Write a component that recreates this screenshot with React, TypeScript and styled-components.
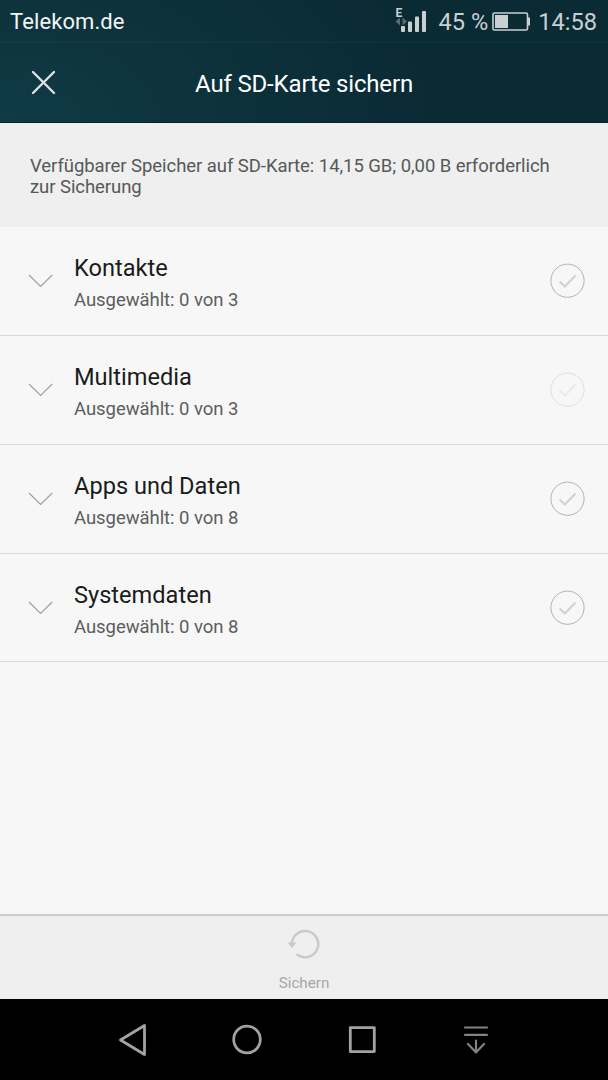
import React from "react";
import styled, { createGlobalStyle } from "styled-components";

const GlobalStyle = createGlobalStyle`
  * { box-sizing: border-box; }
  body { margin: 0; background: #000; font-family: Roboto, "Liberation Sans", sans-serif; }
`;

const Screen = styled.div`
  width: 608px;
  height: 1080px;
  display: flex;
  flex-direction: column;
  overflow: hidden;
  background: #f7f7f7;
`;

const Header = styled.header`
  height: 123px;
  flex: none;
  background: radial-gradient(ellipse 440px 260px at 0 125px, #0f3b46 0%, #0d333d 45%, #0a2a34 100%);
  border-bottom: 1px solid #08222b;
`;

const StatusBar = styled.div`
  height: 43px;
  padding: 1px 11px 0 10px;
  display: flex;
  align-items: center;
  border-bottom: 1px solid rgba(40, 90, 100, 0.22);
`;

const StatusText = styled.span<{ $size: number; $color?: string; $left?: number; $spacing?: number }>`
  font-size: ${(p) => p.$size}px;
  line-height: 28px;
  white-space: nowrap;
  color: ${(p) => p.$color ?? "#c9d0d2"};
  margin-left: ${(p) => p.$left ?? 0}px;
  letter-spacing: ${(p) => p.$spacing ?? 0}px;
`;

const StatusIcons = styled.div`
  margin-left: auto;
  display: flex;
  align-items: center;
`;

const SignalBox = styled.span`
  display: grid;
  width: 34px;
  height: 28px;
  > * { grid-area: 1 / 1; }
`;

const NetworkType = styled.span`
  font-size: 12px;
  font-weight: 700;
  line-height: 10px;
  color: #c9d0d2;
  padding-left: 3px;
`;

const Battery = styled.svg`
  margin-left: 4px;
`;

const TitleBar = styled.div`
  height: 79px;
  display: grid;
  grid-template-columns: 87px 1fr 87px;
  align-items: center;
`;

const IconButton = styled.button`
  border: 0;
  padding: 0;
  background: none;
  display: flex;
  align-items: center;
  justify-content: center;
`;

const Title = styled.h1`
  margin: 0;
  padding-top: 3px;
  text-align: center;
  font-size: 24px;
  line-height: 28px;
  letter-spacing: -0.16px;
  font-weight: 400;
  color: #fff;
`;

const Info = styled.p`
  margin: 0;
  height: 104px;
  flex: none;
  padding: 33px 30px 0;
  background: #efefef;
  color: #555958;
  font-size: 18.5px;
  letter-spacing: -0.06px;
  line-height: 21px;
`;

const List = styled.ul`
  list-style: none;
  margin: 0;
  padding: 0;
  flex: 1;
`;

const Row = styled.li`
  height: 109px;
  display: grid;
  grid-template-columns: 74px 1fr 58px;
  align-items: center;
  border-bottom: 1px solid #d9d9d9;
  &:last-child { height: 108px; }
`;

const Chevron = styled.svg`
  margin-left: 28px;
`;

const RowText = styled.div`
  padding-top: 4px;
`;

const RowTitle = styled.div`
  font-size: 23.6px;
  line-height: 30px;
  color: #1a1c1b;
`;

const RowSub = styled.div`
  margin-top: 4px;
  font-size: 18.5px;
  letter-spacing: -0.05px;
  line-height: 26px;
  color: #5a5e5d;
`;

const Footer = styled.footer`
  height: 85px;
  flex: none;
  padding-top: 13px;
  background: #efefef;
  border-top: 2px solid #cccccc;
  display: flex;
  flex-direction: column;
  align-items: center;
`;

const FooterLabel = styled.span`
  margin-top: 12px;
  font-size: 15.2px;
  line-height: 20px;
  color: #a3a8a7;
`;

const NavBar = styled.nav`
  height: 81px;
  flex: none;
  background: #000;
  display: flex;
  justify-content: center;
  padding-left: 1px;
`;

const NavButton = styled(IconButton)`
  width: 114.6px;
  height: 81px;
`;

const Check = ({ disabled }: { disabled?: boolean }) => (
  <svg width="36" height="36" viewBox="0 0 36 36" fill="none" opacity={disabled ? 0.35 : 1}>
    <circle cx="17.5" cy="17.700" r="16.600" stroke="#aeb3b2" strokeWidth="1" />
    <path d="M9.600 18.500l5.200 5L25.600 12.500" stroke="#d0d3d2" strokeWidth="2.200" />
  </svg>
);

const sections = [
  { name: "Kontakte", total: 3, disabled: false },
  { name: "Multimedia", total: 3, disabled: true },
  { name: "Apps und Daten", total: 8, disabled: false },
  { name: "Systemdaten", total: 8, disabled: false },
];

export default function App() {
  return (
    <>
      <GlobalStyle />
      <Screen>
        <Header>
          <StatusBar>
            <StatusText $size={22} $color="#f2f5f5" $spacing={0.1}>Telekom.de</StatusText>
            <StatusIcons>
              <SignalBox>
                <svg width="34" height="28" viewBox="0 0 34 28">
                  <path d="M7 9.500v8l-4.500-4zM9.500 9.500v8l4.500-4z" fill="#5f6b6f" />
                  <g fill="#c9d0d2">
                    <rect x="8" y="18" width="4" height="6" rx="1" />
                    <rect x="15" y="13.500" width="4" height="10.500" rx="1" />
                    <rect x="22" y="8.500" width="4" height="15.500" rx="1" />
                    <rect x="29" y="3" width="4" height="21" rx="1" />
                  </g>
                </svg>
                <NetworkType>E</NetworkType>
              </SignalBox>
              <StatusText $size={23.6} $left={12}>45 %</StatusText>
              <Battery width="39" height="20" viewBox="0 0 39 20">
                <rect x="1" y="1" width="34.500" height="17" rx="1.500" fill="none" stroke="#c9d0d2" strokeWidth="1.600" />
                <rect x="3" y="3" width="13" height="13" fill="#c9d0d2" />
                <rect x="36" y="5.500" width="2" height="8" fill="#c9d0d2" />
              </Battery>
              <StatusText $size={23.6} $left={7}>14:58</StatusText>
            </StatusIcons>
          </StatusBar>
          <TitleBar>
            <IconButton aria-label="Schließen">
              <svg width="26" height="26" viewBox="0 0 26 26" stroke="#dfe2e3" strokeWidth="2.400" strokeLinecap="round">
                <path d="M2 2l21 21M23 2l-21 21" />
              </svg>
            </IconButton>
            <Title>Auf SD-Karte sichern</Title>
          </TitleBar>
        </Header>
        <Info>Verfügbarer Speicher auf SD-Karte: 14,15 GB; 0,00 B erforderlich zur Sicherung</Info>
        <List>
          {sections.map((s) => (
            <Row key={s.name}>
              <Chevron width="26" height="14" viewBox="0 0 26 14" fill="none" stroke="#9a9f9e" strokeWidth="1.100">
                <path d="M1 1l11.600 11.500L24.200 1" />
              </Chevron>
              <RowText>
                <RowTitle>{s.name}</RowTitle>
                <RowSub>Ausgewählt: 0 von {s.total}</RowSub>
              </RowText>
              <Check disabled={s.disabled} />
            </Row>
          ))}
        </List>
        <Footer>
          <svg width="34" height="32" viewBox="0 0 34 32">
            <path d="M5 17A13.200 13.200 0 1 1 9.500 25.200" fill="none" stroke="#c6cac9" strokeWidth="2.400" />
            <path d="M0.500 13.500h9l-4.500 5.500z" fill="#c6cac9" />
          </svg>
          <FooterLabel>Sichern</FooterLabel>
        </Footer>
        <NavBar>
          <NavButton aria-label="Zurück">
            <svg width="32" height="34" viewBox="0 0 32 34" fill="none" stroke="#a0a3a3" strokeWidth="2.800" strokeLinejoin="round">
              <path d="M27.500 2.500v29L3.500 17z" />
            </svg>
          </NavButton>
          <NavButton aria-label="Startseite">
            <svg width="32" height="32" viewBox="0 0 32 32" fill="none" stroke="#a0a3a3" strokeWidth="2.800">
              <circle cx="16" cy="15.500" r="13.300" />
            </svg>
          </NavButton>
          <NavButton aria-label="Übersicht">
            <svg width="30" height="30" viewBox="0 0 30 30" fill="none" stroke="#a0a3a3" strokeWidth="2.800" strokeLinejoin="round">
              <rect x="3.300" y="2.600" width="24" height="24" />
            </svg>
          </NavButton>
          <NavButton aria-label="Leiste ausblenden">
            <svg width="26" height="30" viewBox="0 0 26 30" fill="none" stroke="#808383" strokeWidth="2.200" strokeLinecap="round">
              <path d="M2 2.500h22M2 9.800h22M13 15.500v12M5 19l8 8.500 8-8.500" />
            </svg>
          </NavButton>
        </NavBar>
      </Screen>
    </>
  );
}
